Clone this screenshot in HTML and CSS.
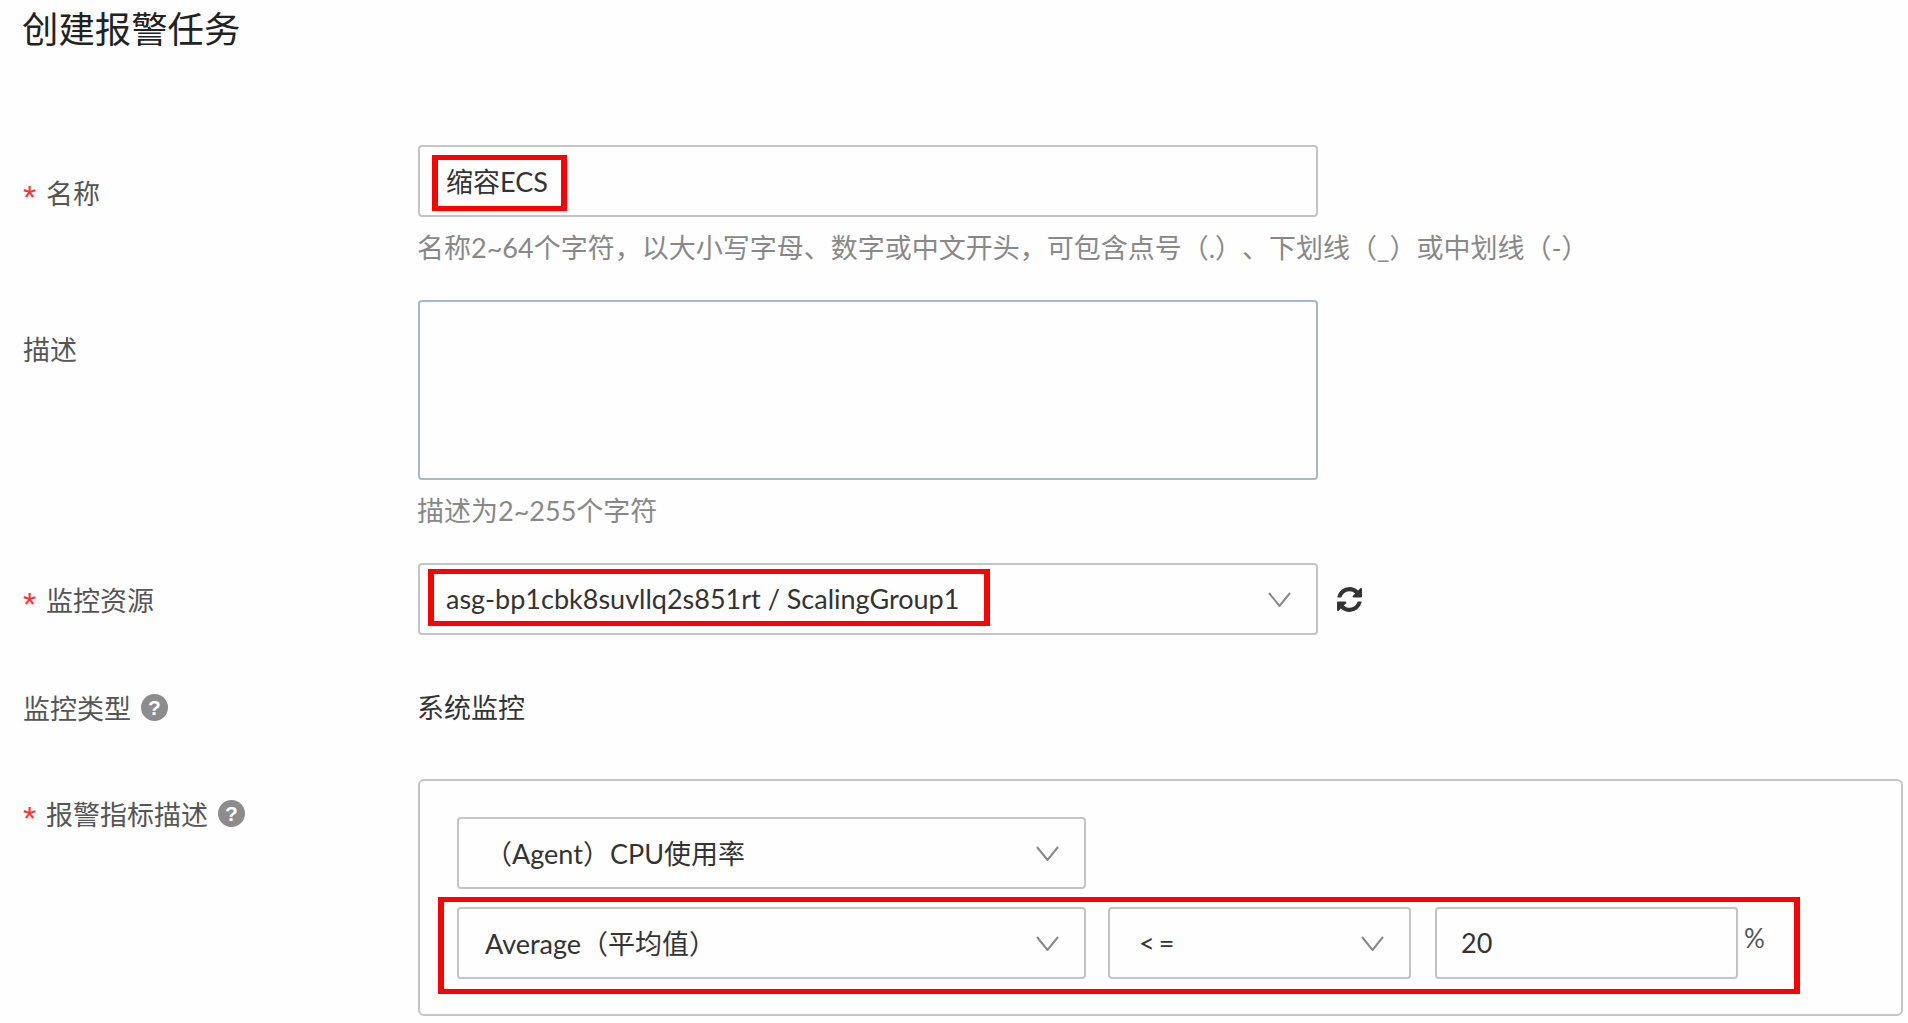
FILE: index.html
```html
<!DOCTYPE html>
<html lang="zh-CN">
<head>
    <meta charset="UTF-8">
    <meta name="viewport" content="width=device-width, initial-scale=1.0">
    <title>创建报警任务</title>
    <link rel="stylesheet" href="styles.css">
</head>
<body>

<h2>创建报警任务</h2>

<div class="row row-name">
    <label class="label label-name"><span class="star">*</span>名称</label>
    <div class="content">
        <div class="field field-wide">
            <span class="mark mark-name"></span>
            <span class="value">缩容ECS</span>
        </div>
        <p class="hint">名称2~64个字符，以大小写字母、数字或中文开头，可包含点号（.）、下划线（_）或中划线（-）</p>
    </div>
</div>

<div class="row row-desc">
    <label class="label label-desc">描述</label>
    <div class="content">
        <div class="field field-wide textarea"></div>
        <p class="hint">描述为2~255个字符</p>
    </div>
</div>

<div class="row row-resource">
    <label class="label label-resource"><span class="star">*</span>监控资源</label>
    <div class="content inline">
        <div class="field field-wide">
            <span class="mark mark-resource"></span>
            <span class="value">asg-bp1cbk8suvllq2s851rt / ScalingGroup1</span>
            <svg class="chevron" viewBox="0 0 23 15"><polyline points="1,1 11.5,14 22,1"/></svg>
        </div>
        <svg class="refresh" viewBox="128 128 1536 1536"><path d="M1639 1056q0 5-1 7-64 268-268 434.5t-478 166.5q-146 0-282.5-55t-243.5-157l-129 129q-19 19-45 19t-45-19-19-45v-448q0-26 19-45t45-19h448q26 0 45 19t19 45-19 45l-137 137q71 66 161 102t187 36q134 0 250-65t186-179q11-17 53-117 8-23 30-23h192q13 0 22.5 9.5t9.5 22.5zm25-800v448q0 26-19 45t-45 19h-448q-26 0-45-19t-19-45 19-45l138-138q-148-137-349-137-134 0-250 65t-186 179q-11 17-53 117-8 23-30 23h-199q-13 0-22.5-9.5t-9.5-22.5v-7q65-268 270-434.5t480-166.5q146 0 284 55.5t245 156.5l130-129q19-19 45-19t45 19 19 45z"/></svg>
    </div>
</div>

<div class="row row-type">
    <label class="label label-type">监控类型<span class="help">?</span></label>
    <div class="content plain">系统监控</div>
</div>

<div class="row">
    <label class="label label-metric"><span class="star">*</span>报警指标描述<span class="help">?</span></label>
    <div class="content">
        <div class="metric-box">
            <div class="metric-line">
                <div class="field field-select metric-name">
                    <span class="value">（Agent）CPU使用率</span>
                    <svg class="chevron" viewBox="0 0 23 15"><polyline points="1,1 11.5,14 22,1"/></svg>
                </div>
            </div>
            <div class="metric-line metric-rule">
                <span class="mark mark-rule"></span>
                <div class="field field-select">
                    <span class="value">Average（平均值）</span>
                    <svg class="chevron" viewBox="0 0 23 15"><polyline points="1,1 11.5,14 22,1"/></svg>
                </div>
                <div class="field field-op">
                    <span class="value value-op">&lt;=</span>
                    <svg class="chevron" viewBox="0 0 23 15"><polyline points="1,1 11.5,14 22,1"/></svg>
                </div>
                <div class="field field-op field-num">
                    <span class="value value-num">20</span>
                </div>
                <span class="unit">%</span>
            </div>
        </div>
    </div>
</div>

</body>
</html>
```

FILE: styles.css
```css
body {
    margin: 0;
    padding: 0 5px 0 23px;
    background-color: #fefefe;
    font-family: Lato, "Noto Sans CJK SC", "Liberation Sans", sans-serif;
    font-size: 27px;
    color: #333;
    text-spacing-trim: space-all;
}
h2 {
    margin: 0 0 87px -1px;
    height: 58px;
    line-height: 58px;
    font-size: 36.4px;
    font-weight: 400;
    color: #222;
}
p {
    margin: 0;
}
.row {
    display: grid;
    grid-template-columns: 395px 1fr;
}
.row-desc {
    margin-top: 32px;
}
.row-resource {
    margin-top: 32px;
}
.row-type {
    margin: 53px 0 51px;
}
.label {
    display: flex;
    align-items: center;
    height: 40px;
    color: #555;
}
.label-name {
    margin-top: 27px;
}
.label-desc {
    margin-top: 28px;
}
.label-resource {
    margin-top: 16px;
}
.label-type {
    margin-top: -1px;
}
.label-metric {
    margin-top: 14px;
}
.star {
    width: 23px;
    color: #f33;
    font-family: "Liberation Sans", sans-serif;
    font-size: 34px;
    line-height: 40px;
    transform: translateY(5px);
}
.help {
    width: 27px;
    height: 27px;
    margin-left: 10px;
    border-radius: 50%;
    background: #8c8c8c;
    color: white;
    font-family: "Liberation Sans", sans-serif;
    font-size: 21px;
    font-weight: 700;
    line-height: 27px;
    text-align: center;
}
.field {
    position: relative;
    display: flex;
    align-items: center;
    justify-content: space-between;
    height: 72px;
    padding: 0 25px 0 26px;
    box-sizing: border-box;
    border: 2px solid #c4c4c4;
    border-radius: 4px;
}
.field-wide {
    width: 900px;
}
.textarea {
    height: 180px;
    border-color: #a9b8c8;
}
.field-select {
    width: 629px;
}
.field-op {
    width: 303px;
    margin-left: 22px;
}
.field-num {
    margin-left: 24px;
}
.value {
    position: relative;
    top: -1px;
    color: #333;
}
.value-op {
    margin-left: 3px;
    letter-spacing: 4px;
}
.value-num {
    margin-left: -2px;
}
.hint {
    height: 40px;
    margin: 11px 0 0 -1px;
    line-height: 40px;
    color: #888;
    white-space: nowrap;
}
.chevron {
    width: 23px;
    height: 15px;
    flex-shrink: 0;
}
.chevron polyline {
    fill: none;
    stroke: #888;
    stroke-width: 2;
}
.inline {
    display: flex;
    align-items: center;
}
.refresh {
    width: 25px;
    height: 25px;
    margin-left: 19px;
    fill: #333;
}
.plain {
    height: 40px;
    margin-left: -1px;
    line-height: 40px;
}
.metric-box {
    height: 237px;
    padding: 36px 0 0 37px;
    box-sizing: border-box;
    border: 2px solid #c4c4c4;
    border-radius: 6px;
}
.metric-line {
    position: relative;
    display: flex;
    margin-bottom: 18px;
}
.unit {
    margin: -5px 0 0 6px;
    line-height: 72px;
    font-size: 26px;
    color: #555;
}
/* red annotation frames drawn on top of the screenshot */
.mark {
    position: absolute;
    box-sizing: border-box;
    border: 6px solid #f00;
    border-width: 5px 6px;
}
.mark-name {
    left: 12px;
    top: 8px;
    width: 135px;
    height: 56px;
}
.mark-resource {
    left: 8px;
    top: 4px;
    width: 562px;
    height: 57px;
}
.mark-rule {
    left: -19px;
    top: -10px;
    width: 1362px;
    height: 97px;
}
```
